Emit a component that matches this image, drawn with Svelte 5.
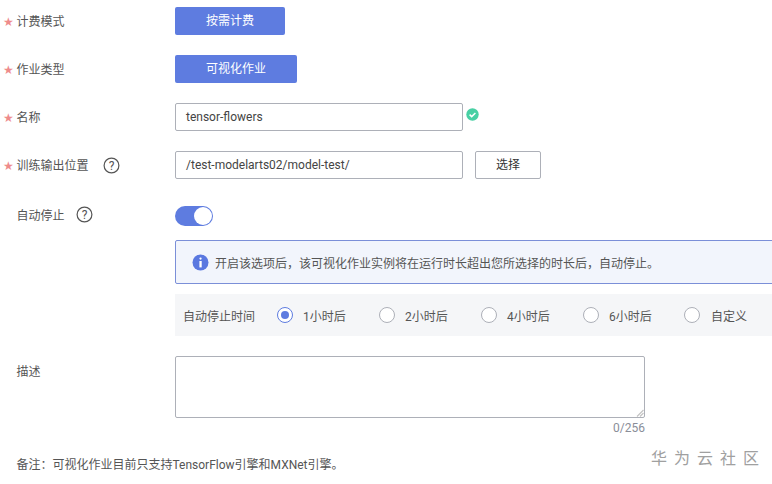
<script>
	const radios = [
		{ label: '1小时后', checked: true, w: 102 },
		{ label: '2小时后', checked: false, w: 102 },
		{ label: '4小时后', checked: false, w: 102 },
		{ label: '6小时后', checked: false, w: 101 },
		{ label: '自定义', checked: false, w: 70 }
	];
</script>

<div class="page">
	<div class="row">
		<div class="label"><span class="star">★</span>计费模式</div>
		<div class="pill pill-a">按需计费</div>
	</div>
	<div class="row">
		<div class="label"><span class="star">★</span>作业类型</div>
		<div class="pill pill-b">可视化作业</div>
	</div>
	<div class="row">
		<div class="label"><span class="star">★</span>名称</div>
		<div class="input">tensor-flowers</div>
		<svg class="ok" width="13" height="13" viewBox="0 0 13 13">
			<circle cx="6.5" cy="6.5" r="6.2" fill="#48d0a4" />
			<path d="M3.6 6.6l2.1 2 3.7-3.6" fill="none" stroke="#fff" stroke-width="1.5" />
		</svg>
	</div>
	<div class="row">
		<div class="label">
			<span class="star">★</span>训练输出位置
			<svg class="help help-a" width="17" height="17" viewBox="0 0 17 17">
				<circle cx="8.5" cy="8.5" r="7.4" fill="none" stroke="#555" stroke-width="1.2" />
				<text x="8.5" y="12.6" text-anchor="middle">?</text>
			</svg>
		</div>
		<div class="input">/test-modelarts02/model-test/</div>
		<div class="select-btn">选择</div>
	</div>

	<div class="row row-toggle">
		<div class="label">
			自动停止
			<svg class="help help-b" width="17" height="17" viewBox="0 0 17 17">
				<circle cx="8.5" cy="8.5" r="7.4" fill="none" stroke="#555" stroke-width="1.2" />
				<text x="8.5" y="12.6" text-anchor="middle">?</text>
			</svg>
		</div>
		<div class="toggle"><span class="knob"></span></div>
	</div>

	<div class="indent">
		<div class="info">
			<svg width="17" height="17" viewBox="0 0 17 17">
				<circle cx="8.5" cy="8.5" r="8" fill="#5a78e0" />
				<rect x="7.4" y="3.4" width="2.3" height="2.3" rx="1.1" fill="#fff" />
				<rect x="7.4" y="7" width="2.3" height="6.4" fill="#fff" />
			</svg>
			<span>开启该选项后，该可视化作业实例将在运行时长超出您所选择的时长后，自动停止。</span>
		</div>
		<div class="radios">
			<span class="radios-title">自动停止时间</span>
			{#each radios as r, i}
				<span class="radio-item" class:last={i === radios.length - 1} style="width: {r.w}px">
					<span class="radio" class:checked={r.checked}></span>
					<span>{r.label}</span>
				</span>
			{/each}
		</div>
	</div>

	<div class="row row-desc">
		<div class="label">描述</div>
		<div class="desc-field">
			<div class="textarea">
				<svg class="grip" width="9" height="9" viewBox="0 0 9 9">
					<path d="M8.500 2L2 8.500M8.500 5L5 8.500" fill="none" stroke="#c4c4c4" stroke-width="1.2" />
				</svg>
			</div>
			<div class="count">0/256</div>
		</div>
	</div>

	<div class="note">备注：可视化作业目前只支持TensorFlow引擎和MXNet引擎。</div>

	<div class="mark">华为云社区</div>
</div>

<style>
	:global(body) {
		margin: 0;
		background: #fff;
	}

	.page {
		position: relative;
		width: 772px;
		height: 484px;
		overflow: hidden;
		padding-top: 7px;
		box-sizing: border-box;
		font-family: Roboto, 'Noto Sans CJK SC', sans-serif;
		font-size: 12px;
		color: #555;
	}

	.row {
		display: flex;
		align-items: center;
		height: 28px;
		margin-bottom: 20px;
	}

	.label {
		position: relative;
		display: flex;
		align-items: center;
		width: 175px;
		height: 28px;
		padding-left: 16.5px;
		box-sizing: border-box;
		flex-shrink: 0;
		margin-top: -1px;
	}

	.star {
		position: absolute;
		left: 3px;
		top: 8px;
		color: #ee8b8b;
		font-family: 'DejaVu Sans', sans-serif;
		font-size: 12px;
		line-height: 14px;
	}

	.pill {
		height: 28px;
		line-height: 28px;
		text-align: center;
		background: #5e7ce0;
		color: #fff;
		border-radius: 2px;
	}

	.pill-a {
		width: 110px;
	}

	.pill-b {
		width: 122px;
	}

	.input {
		width: 288px;
		height: 28px;
		line-height: 26px;
		box-sizing: border-box;
		border: 1px solid #adb0b8;
		border-radius: 2px;
		padding-left: 10px;
		font-size: 12px;
		color: #444;
	}

	.ok {
		margin: -5px 0 0 3px;
	}

	.help {
		position: absolute;
		top: 6px;
	}

	.help-a {
		left: 103px;
	}

	.help-b {
		left: 76px;
	}

	.help text {
		font-size: 12px;
		fill: #555;
		font-family: Roboto, sans-serif;
	}

	.select-btn {
		width: 66px;
		height: 28px;
		line-height: 26px;
		margin-left: 12px;
		text-align: center;
		box-sizing: border-box;
		border: 1px solid #adb0b8;
		border-radius: 2px;
		color: #333;
	}

	.row-toggle {
		height: 20px;
		margin-top: 27px;
		margin-bottom: 14px;
	}

	.row-toggle .label {
		margin-top: -4px;
	}

	.toggle {
		position: relative;
		width: 38px;
		height: 20px;
		border-radius: 10px;
		background: #5e7ce0;
	}

	.knob {
		position: absolute;
		right: 1px;
		top: 1px;
		width: 18px;
		height: 18px;
		border-radius: 50%;
		background: #fff;
	}

	.indent {
		margin-left: 175px;
	}

	.info {
		display: flex;
		align-items: center;
		gap: 6px;
		width: 620px;
		height: 44px;
		padding-left: 16px;
		box-sizing: border-box;
		background: #f2f5fc;
		border: 1px solid #7b8fd8;
		border-radius: 2px;
	}

	.radios {
		display: flex;
		align-items: center;
		height: 42px;
		margin-top: 10px;
		padding-left: 8px;
		background: #f5f6f8;
	}

	.radios-title {
		width: 94px;
		flex-shrink: 0;
	}

	.radio-item {
		display: flex;
		align-items: center;
		gap: 10px;
		flex-shrink: 0;
	}

	.radio-item.last {
		gap: 11px;
	}

	.radio {
		width: 16px;
		height: 16px;
		border-radius: 50%;
		box-sizing: border-box;
		border: 1px solid #adb0b8;
		background: #fff;
		position: relative;
	}

	.radio.checked {
		border-color: #5e7ce0;
	}

	.radio.checked::after {
		content: '';
		position: absolute;
		left: 3px;
		top: 3px;
		width: 8px;
		height: 8px;
		border-radius: 50%;
		background: #5e7ce0;
	}

	.row-desc {
		align-items: flex-start;
		height: auto;
		margin: 20px 0 0;
	}

	.row-desc .label {
		margin-top: 0;
	}

	.textarea {
		position: relative;
		width: 470px;
		height: 62px;
		box-sizing: border-box;
		border: 1px solid #adb0b8;
		border-radius: 2px;
	}

	.grip {
		position: absolute;
		right: 0;
		bottom: 0;
	}

	.count {
		margin-top: 3px;
		text-align: right;
		color: #8a8e99;
		line-height: 15px;
	}

	.note {
		margin: 21px 0 0 16.5px;
		line-height: 16px;
	}

	.mark {
		position: absolute;
		left: 651px;
		top: 445px;
		font-size: 16px;
		letter-spacing: 7px;
		color: #a0a0a0;
		white-space: nowrap;
	}
</style>
